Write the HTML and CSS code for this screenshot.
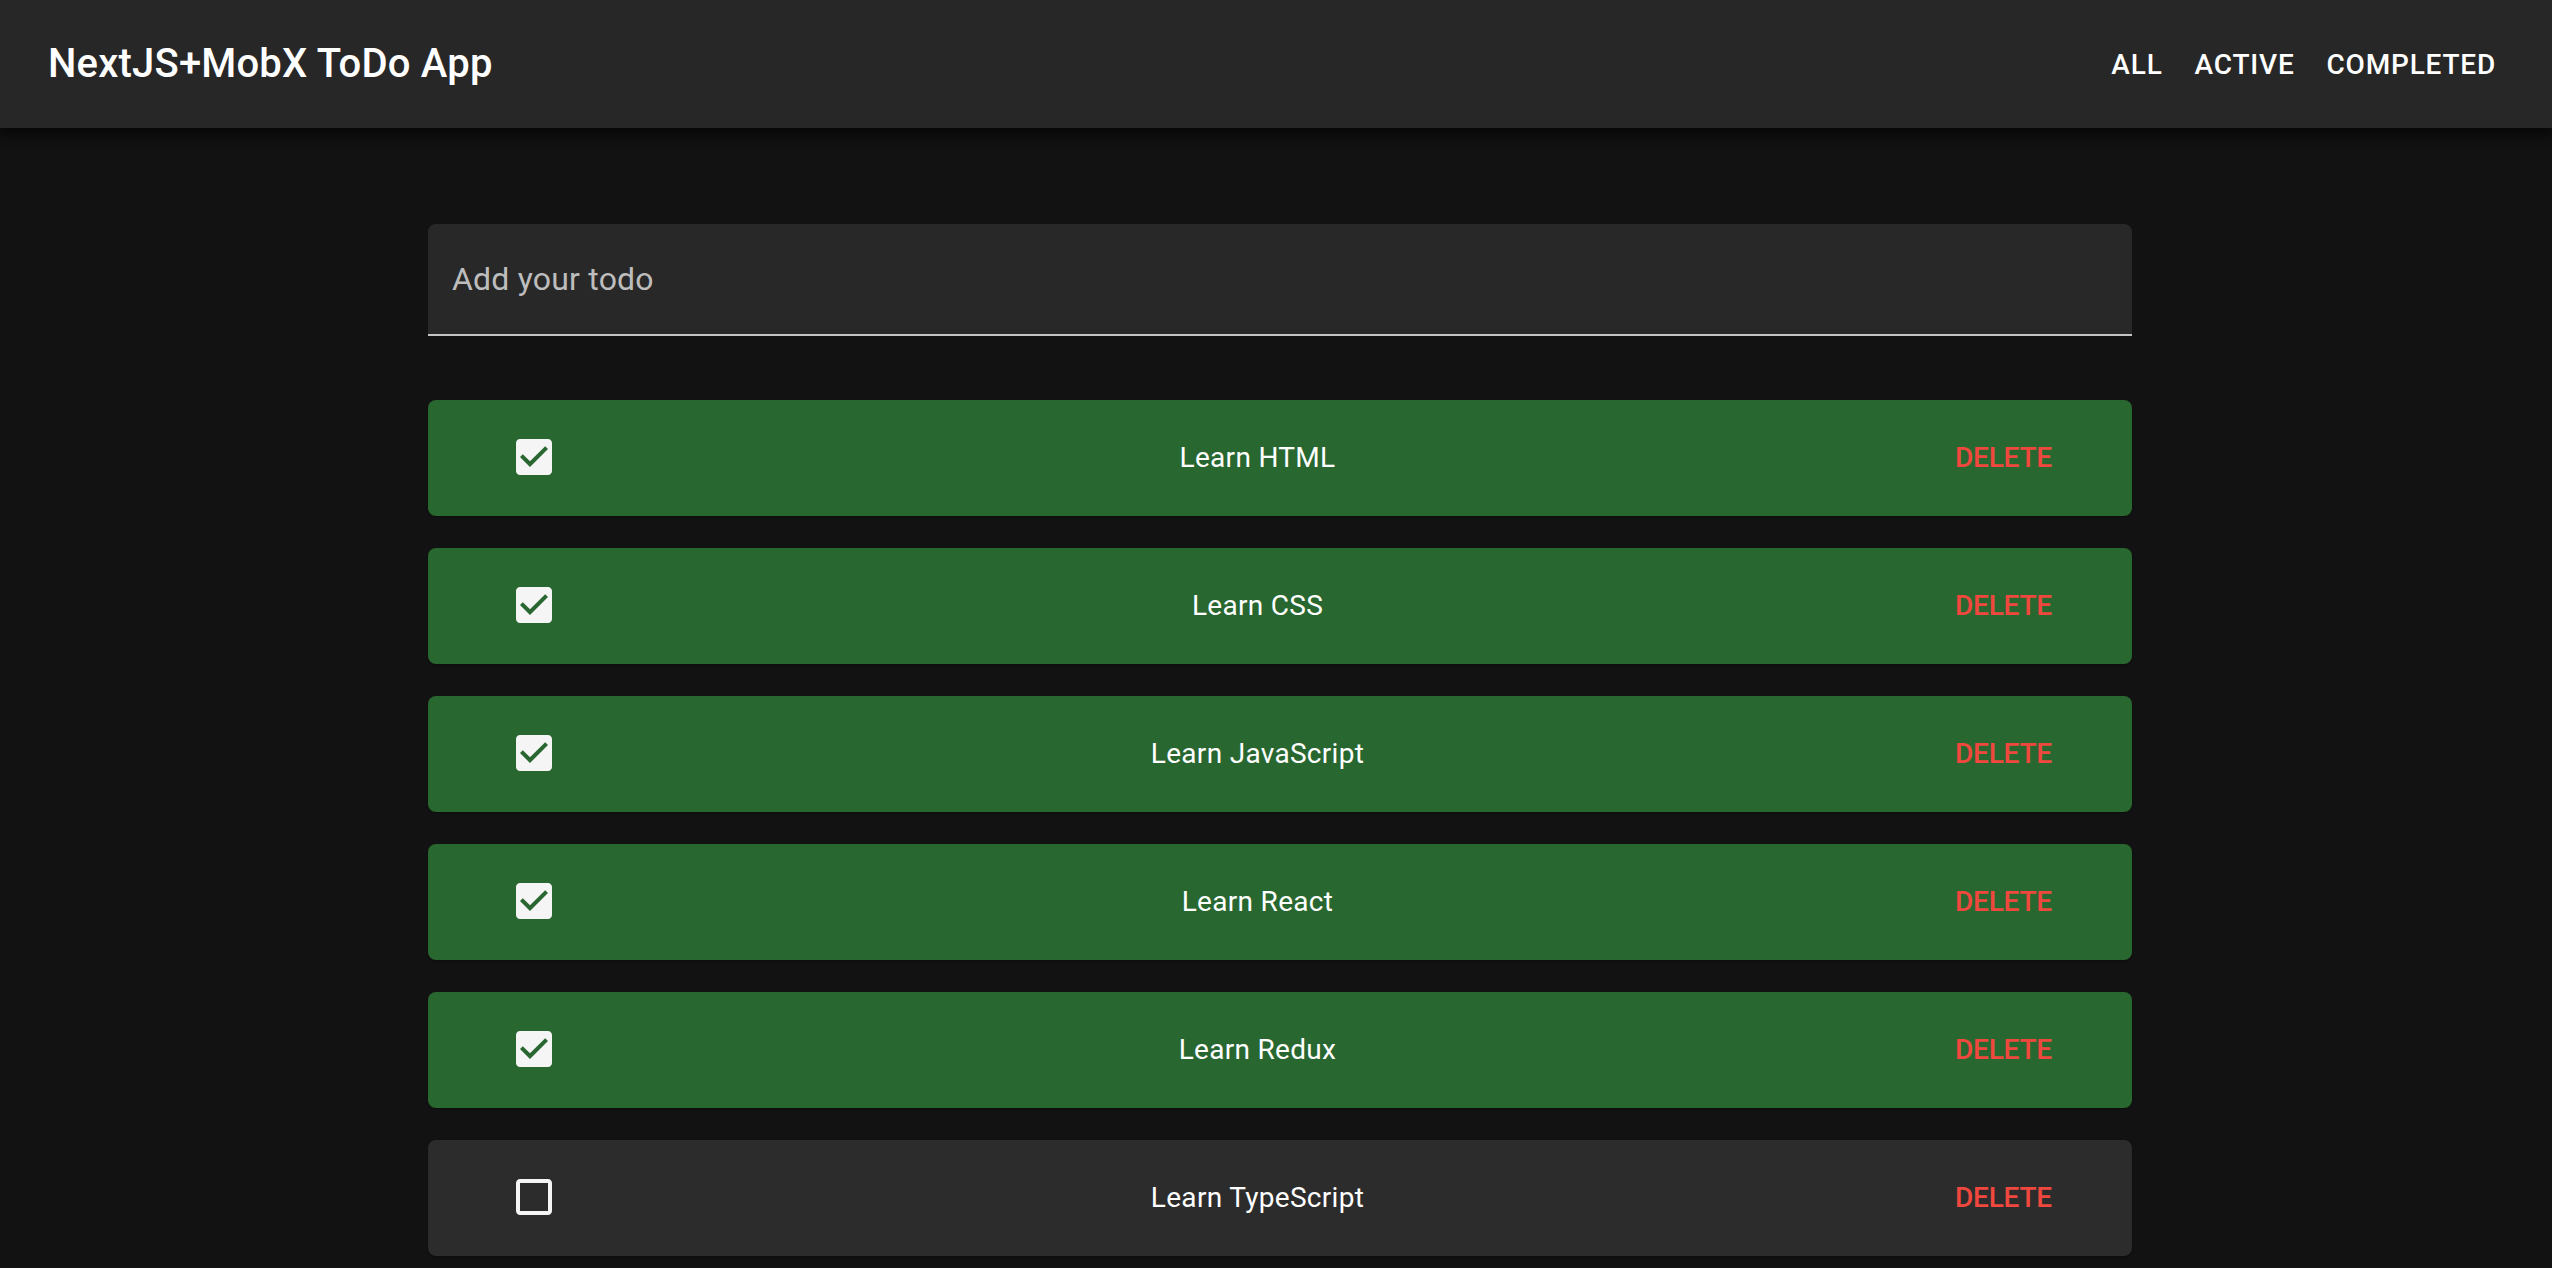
FILE: index.html
```html
<!DOCTYPE html>
<html lang="en">
<head>
<meta charset="utf-8">
<title>NextJS+MobX ToDo App</title>
<link rel="stylesheet" href="styles.css">
</head>
<body>
<header class="appbar">
  <div class="title">NextJS+MobX ToDo App</div>
  <nav class="nav">
    <button class="nav-btn">All</button>
    <button class="nav-btn">Active</button>
    <button class="nav-btn">Completed</button>
  </nav>
</header>
<div class="page">
  <main class="container">
    <div class="field">
      <span class="field-label">Add your todo</span>
    </div>
    <ul class="list">
      <li class="todo done">
        <span class="check"><svg viewBox="0 0 24 24" width="48" height="48"><path d="M19 3H5c-1.11 0-2 .9-2 2v14c0 1.1.89 2 2 2h14c1.11 0 2-.9 2-2V5c0-1.1-.89-2-2-2zm-9 14l-5-5 1.410-1.41L10 14.17l7.59-7.59L19 8l-9 9z"/></svg></span>
        <span class="todo-text">Learn HTML</span>
        <button class="del">Delete</button>
      </li>
      <li class="todo done">
        <span class="check"><svg viewBox="0 0 24 24" width="48" height="48"><path d="M19 3H5c-1.11 0-2 .9-2 2v14c0 1.1.89 2 2 2h14c1.11 0 2-.9 2-2V5c0-1.1-.89-2-2-2zm-9 14l-5-5 1.41-1.41L10 14.17l7.59-7.59L19 8l-9 9z"/></svg></span>
        <span class="todo-text">Learn CSS</span>
        <button class="del">Delete</button>
      </li>
      <li class="todo done">
        <span class="check"><svg viewBox="0 0 24 24" width="48" height="48"><path d="M19 3H5c-1.11 0-2 .9-2 2v14c0 1.1.89 2 2 2h14c1.11 0 2-.9 2-2V5c0-1.1-.89-2-2-2zm-9 14l-5-5 1.41-1.41L10 14.17l7.59-7.59L19 8l-9 9z"/></svg></span>
        <span class="todo-text">Learn JavaScript</span>
        <button class="del">Delete</button>
      </li>
      <li class="todo done">
        <span class="check"><svg viewBox="0 0 24 24" width="48" height="48"><path d="M19 3H5c-1.11 0-2 .9-2 2v14c0 1.1.89 2 2 2h14c1.11 0 2-.9 2-2V5c0-1.1-.89-2-2-2zm-9 14l-5-5 1.41-1.41L10 14.17l7.59-7.59L19 8l-9 9z"/></svg></span>
        <span class="todo-text">Learn React</span>
        <button class="del">Delete</button>
      </li>
      <li class="todo done">
        <span class="check"><svg viewBox="0 0 24 24" width="48" height="48"><path d="M19 3H5c-1.11 0-2 .9-2 2v14c0 1.1.89 2 2 2h14c1.11 0 2-.9 2-2V5c0-1.1-.89-2-2-2zm-9 14l-5-5 1.41-1.41L10 14.17l7.59-7.59L19 8l-9 9z"/></svg></span>
        <span class="todo-text">Learn Redux</span>
        <button class="del">Delete</button>
      </li>
      <li class="todo">
        <span class="check"><svg viewBox="0 0 24 24" width="48" height="48"><path d="M19 5v14H5V5h14m0-2H5c-1.1 0-2 .9-2 2v14c0 1.1.9 2 2 2h14c1.1 0 2-.9 2-2V5c0-1.1-.9-2-2-2z"/></svg></span>
        <span class="todo-text">Learn TypeScript</span>
        <button class="del">Delete</button>
      </li>
    </ul>
  </main>
</div>
</body>
</html>
```
FILE: styles.css
```css
html, body {
  margin: 0;
  padding: 0;
  height: 100%;
  overflow: hidden;
}
body {
  background: #121212;
  color: #fff;
  font-family: Roboto, "Liberation Sans", Arial, sans-serif;
}
.appbar {
  height: 128px;
  box-sizing: border-box;
  background: #272727;
  display: flex;
  align-items: center;
  justify-content: space-between;
  padding: 0 40px 0 48px;
  box-shadow: 0 4px 8px -2px rgba(0,0,0,0.4), 0 8px 10px 1px rgba(0,0,0,0.28), 0 2px 20px 2px rgba(0,0,0,0.24);
  position: relative;
  z-index: 1;
}
.title {
  font-size: 40px;
  font-weight: 500;
  letter-spacing: 0.2px;
  line-height: 1.6;
}
.nav {
  display: flex;
}
.nav-btn {
  background: none;
  border: 0;
  color: #fff;
  font-family: inherit;
  font-size: 28px;
  font-weight: 500;
  text-transform: uppercase;
  letter-spacing: 0.8px;
  padding: 12px 16px;
  line-height: 1.75;
  cursor: pointer;
}
.page {
  padding-left: 8px;
}
.container {
  width: 1704px;
  margin: 0 auto;
  padding-top: 96px;
}
.field {
  height: 112px;
  box-sizing: border-box;
  background: #282828;
  border-radius: 8px 8px 0 0;
  border-bottom: 2px solid #c4c4c4;
  display: flex;
  align-items: center;
  padding: 0 24px;
}
.field-label {
  font-size: 32px;
  color: #bdbdbd;
  letter-spacing: 0.2px;
}
.list {
  list-style: none;
  margin: 64px 0 0;
  padding: 0;
  display: flex;
  flex-direction: column;
  gap: 32px;
}
.todo {
  height: 116px;
  box-sizing: border-box;
  display: flex;
  align-items: center;
  padding: 0 64px 2px;
  background: #2c2c2c;
  border-radius: 8px;
  box-shadow: 0 2px 2px -1px rgba(0,0,0,0.2), 0 1px 2px 0 rgba(0,0,0,0.14);
}
.todo.done {
  background: #296730;
}
.check {
  width: 84px;
  height: 84px;
  display: flex;
  align-items: center;
  justify-content: center;
}
.check svg {
  fill: #f5f5f5;
  display: block;
}
.todo-text {
  flex: 1;
  text-align: center;
  font-size: 28px;
  letter-spacing: 0.3px;
  color: #fff;
}
.del {
  background: none;
  border: 0;
  color: #f0483e;
  font-family: inherit;
  font-size: 28px;
  font-weight: 500;
  text-transform: uppercase;
  letter-spacing: -0.2px;
  padding: 12px 16px;
  line-height: 1.75;
}
```
